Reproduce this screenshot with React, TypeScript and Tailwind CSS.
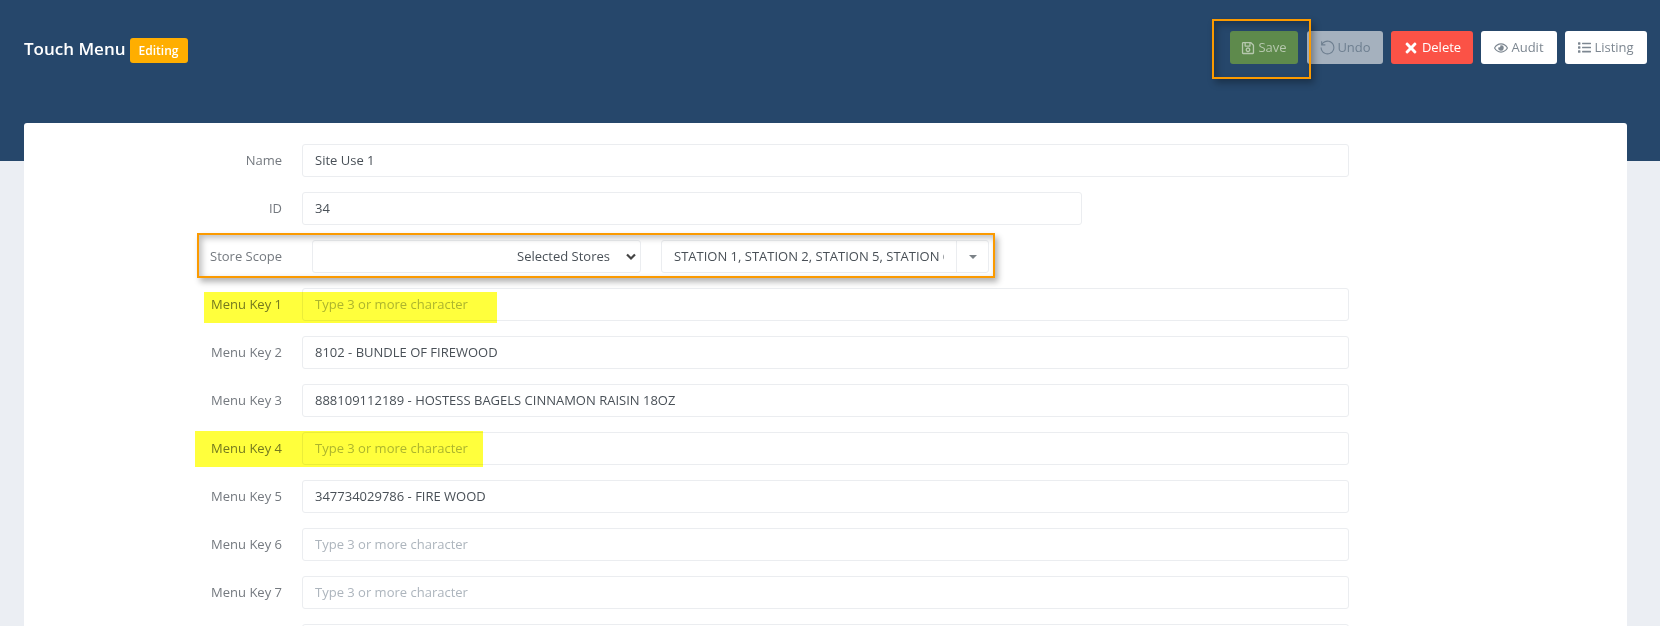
import React from "react";
import { FaRegSave, FaTimes, FaRegEye, FaList } from "react-icons/fa";
import { LiaUndoAltSolid } from "react-icons/lia";

const inputBox = "h-[33px] bg-white border border-[#ebedf0] rounded-[3px] flex items-center px-3 text-[13px] truncate";

function Field({ label, value, placeholder, narrow }: { label?: string; value?: string; placeholder?: string; narrow?: boolean }) {
  return (
    <div className="flex items-center h-[33px] mb-[15px]">
      <div className="w-[278px] pr-[20px] text-right text-[13px] text-[#74797f]">{label}</div>
      <div className={`${inputBox} ${narrow ? "w-[780px]" : "w-[1047px]"} ${value ? "text-[#495057]" : "text-[#adb5bd]"}`}>
        {value ?? placeholder}
      </div>
    </div>
  );
}

function Btn({ cls, icon, label }: { cls: string; icon: React.ReactNode; label: string }) {
  return (
    <div className={`h-[33px] rounded-[3px] flex items-center justify-center text-[13px] ${cls}`}>
      {icon}
      <span>{label}</span>
    </div>
  );
}

export default function App() {
  const ph = "Type 3 or more character";
  return (
    <div className="relative h-[626px] overflow-hidden bg-[#ebeef3] font-['Open_Sans',sans-serif]">
      <header className="h-[161px] bg-[#26476b] flex items-start justify-between pl-6 pr-[13px] pt-[31px]">
        <div className="flex items-center h-[36px] gap-[4px]">
          <span className="text-[17px] font-semibold text-white mb-[1px]">Touch Menu</span>
          <span className="h-[25px] w-[58px] mt-[3px] rounded-[3px] bg-[#ffae00] text-white text-[12px] font-semibold flex items-center justify-center">Editing</span>
        </div>
        <div className="flex items-center gap-2">
          <Btn cls="w-[68px] gap-[3px] bg-[#5e8a4c] text-[#b6c8ae] mr-[1px]" icon={<FaRegSave size={14} />} label="Save" />
          <Btn cls="w-[76px] gap-[1px] bg-[#a5b1be] text-[#6e7f90]" icon={<LiaUndoAltSolid size={17} />} label="Undo" />
          <Btn cls="w-[82px] gap-[3px] bg-[#fb5246] text-white font-medium" icon={<FaTimes size={16} />} label="Delete" />
          <Btn cls="w-[76px] gap-[3px] bg-white text-[#7d8791]" icon={<FaRegEye size={14} />} label="Audit" />
          <Btn cls="w-[82px] gap-[3px] bg-white text-[#7d8791]" icon={<FaList size={13} />} label="Listing" />
        </div>
      </header>

      <main className="mx-6 -mt-[38px] w-[1603px] bg-white rounded-t-[3px] pt-[21px]">
        <Field label="Name" value="Site Use 1" />
        <Field label="ID" value="34" narrow />
        <div className="flex items-center h-[33px] mb-[15px] text-[13px]">
          <div className="w-[288px] pl-[186px] text-[#74797f] whitespace-nowrap">Store Scope</div>
          <div className="w-[329px] h-[33px] border border-[#ebedf0] rounded-[3px] flex items-center justify-end text-[#495057] pr-[4px] gap-[16px]">
            <span>Selected Stores</span>
            <svg width="10" height="8" viewBox="0 0 10 8">
              <path d="M1 1.5 L5 5.5 L9 1.5" fill="none" stroke="#444" strokeWidth="2.2" />
            </svg>
          </div>
          <div className="ml-[20px] w-[328px] h-[33px] border border-[#ebedf0] rounded-[3px] flex items-center text-[#495057]">
            <div className="w-[294px] pl-3 pr-3">
              <div className="overflow-hidden whitespace-nowrap">STATION 1, STATION 2, STATION 5, STATION 6</div>
            </div>
            <div className="flex-1 h-full border-l border-[#ebedf0] flex items-center justify-center">
              <div className="w-0 h-0 border-x-[4px] border-x-transparent border-t-[4px] border-t-[#7b8287]" />
            </div>
          </div>
        </div>
        <Field label="Menu Key 1" placeholder={ph} />
        <Field label="Menu Key 2" value="8102 - BUNDLE OF FIREWOOD" />
        <Field label="Menu Key 3" value="888109112189 - HOSTESS BAGELS CINNAMON RAISIN 18OZ" />
        <Field label="Menu Key 4" placeholder={ph} />
        <Field label="Menu Key 5" value="347734029786 - FIRE WOOD" />
        <Field label="Menu Key 6" placeholder={ph} />
        <Field label="Menu Key 7" placeholder={ph} />
        <Field />
      </main>

      {/* Screenshot annotations */}
      <div className="absolute left-[1212px] top-[19px] w-[99px] h-[60px] border-2 border-[#fb9a00] shadow-[3px_4px_7px_rgba(0,0,0,0.3),inset_3px_4px_7px_rgba(0,0,0,0.25)]" />
      <div className="absolute left-[197px] top-[233px] w-[798px] h-[45px] border-2 border-[#fb9a00] shadow-[3px_4px_6px_rgba(0,0,0,0.3),inset_3px_3px_6px_rgba(0,0,0,0.25)]" />
      <div className="absolute left-[204px] top-[292px] w-[293px] h-[31px] bg-[#ffff3c] mix-blend-multiply" />
      <div className="absolute left-[195px] top-[431px] w-[288px] h-[36px] bg-[#ffff3c] mix-blend-multiply" />
    </div>
  );
}
